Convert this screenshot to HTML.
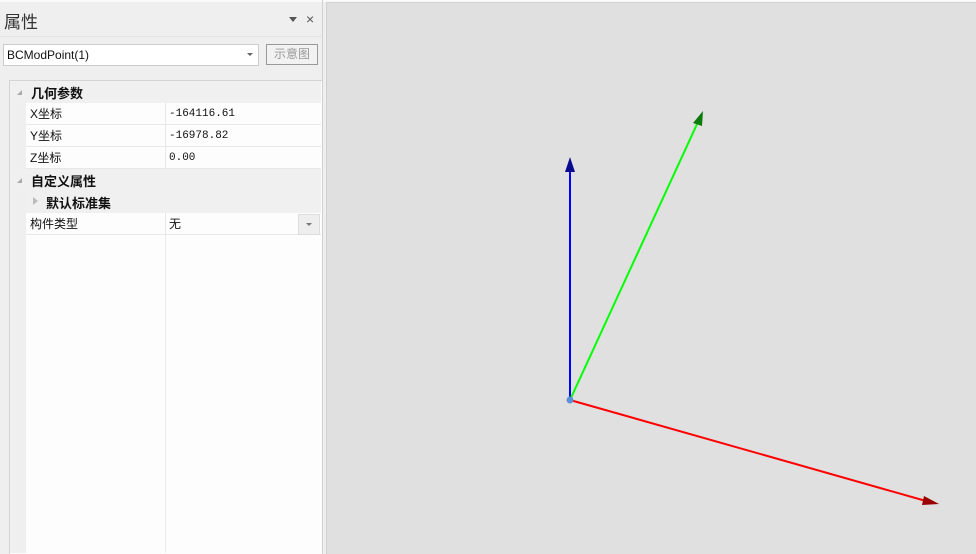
<!DOCTYPE html>
<html><head><meta charset="utf-8"><style>
body{margin:0;width:976px;height:553px;overflow:hidden;background:#efefef;font-family:"Liberation Sans","Noto Sans CJK SC",sans-serif;font-size:12px;color:#111;position:relative}
.a{position:absolute}
.row{position:absolute;left:26px;width:295px;height:21px;border-bottom:1px solid #e8e8e8;background:#fdfdfd}
.row .k{position:absolute;left:4px;top:2px}
.row .v{position:absolute;left:143px;top:5px;font-family:"Liberation Mono","Noto Sans CJK SC",monospace;font-size:11px}
.row .sep{position:absolute;left:139px;top:0;width:1px;height:22px;background:#e8e8e8}
.grp{position:absolute;left:10px;width:311px;height:22px;background:#f0f0f0;font-weight:bold;font-size:13px}
.tri{position:absolute;left:7px;top:9px;width:0;height:0;border-left:5px solid transparent;border-bottom:5px solid #aaa}
</style></head><body>
<div class="a" style="left:0;top:0;width:976px;height:2px;background:#fafafa"></div>
<div class="a" style="left:4px;top:8px;font-size:17px;color:#333">属性</div>
<div class="a" style="left:289px;top:17px;width:0;height:0;border-left:4px solid transparent;border-right:4px solid transparent;border-top:5px solid #555"></div>
<div class="a" style="left:306px;top:11px;font-size:14px;color:#555">×</div>
<div class="a" style="left:0;top:36px;width:322px;height:1px;background:#e4e4e4"></div>
<div class="a" style="left:3px;top:44px;width:254px;height:20px;background:#fff;border:1px solid #ccc"><span style="position:absolute;left:3px;top:3px;font-size:12px">BCModPoint(1)</span><span style="position:absolute;left:243px;top:8px;border-left:3px solid transparent;border-right:3px solid transparent;border-top:3px solid #666"></span></div>
<div class="a" style="left:266px;top:44px;width:50px;height:19px;border:1px solid #999;background:#f2f2f2;color:#999;text-align:center;line-height:19px;font-size:12px">示意图</div>
<div class="a" style="left:9px;top:80px;width:312px;height:473px;background:#fdfdfd;border:1px solid #d4d4d4;border-bottom:none"></div>
<div class="a" style="left:10px;top:81px;width:16px;height:472px;background:#efefef"></div>
<div class="a" style="left:165px;top:235px;width:1px;height:318px;background:#ebebeb"></div>
<div class="grp" style="top:81px"><span class="tri"></span><span class="a" style="left:21px;top:2px">几何参数</span></div>
<div class="row" style="top:103px"><span class="k">X坐标</span><span class="sep"></span><span class="v">-164116.61</span></div>
<div class="row" style="top:125px"><span class="k">Y坐标</span><span class="sep"></span><span class="v">-16978.82</span></div>
<div class="row" style="top:147px"><span class="k">Z坐标</span><span class="sep"></span><span class="v">0.00</span></div>
<div class="grp" style="top:169px"><span class="tri"></span><span class="a" style="left:21px;top:2px">自定义属性</span></div>
<div class="grp" style="top:191px;left:26px;width:295px"><span class="a" style="left:7px;top:6px;width:0;height:0;border-top:4px solid transparent;border-bottom:4px solid transparent;border-left:5px solid #bbb"></span><span class="a" style="left:20px;top:2px">默认标准集</span></div>
<div class="row" style="top:213px"><span class="k">构件类型</span><span class="sep"></span><span class="v" style="font-family:'Noto Sans CJK SC',sans-serif;font-size:12px;top:2px">无</span><span class="a" style="left:272px;top:1px;width:20px;height:19px;background:#eee;border:1px solid #ddd"><span style="position:absolute;left:7px;top:8px;border-left:3px solid transparent;border-right:3px solid transparent;border-top:3px solid #777"></span></span></div>
<div class="a" style="left:322px;top:0;width:1px;height:553px;background:#d0d0d0"></div>
<div class="a" style="left:326px;top:2px;width:650px;height:551px;background:#e0e0e0;border-top:1px solid #d0d0d0;border-left:1px solid #d0d0d0"></div>
<svg class="a" style="left:0;top:0" width="976" height="553">
<line x1="570" y1="400" x2="570" y2="168" stroke="#0000ff" stroke-width="2"/>
<polygon points="570,157 565,172 575,172" fill="#0a0a90"/>
<line x1="570" y1="400" x2="698" y2="122" stroke="#00ff00" stroke-width="2"/>
<polygon points="703,111 693,123 702,126" fill="#0a7a0a"/>
<line x1="570" y1="400" x2="926" y2="501" stroke="#ff0000" stroke-width="2"/>
<polygon points="939,504 924,496 922,505" fill="#900"/>
<circle cx="570" cy="400" r="3.5" fill="#5b8fd6"/>
</svg>
</body></html>
